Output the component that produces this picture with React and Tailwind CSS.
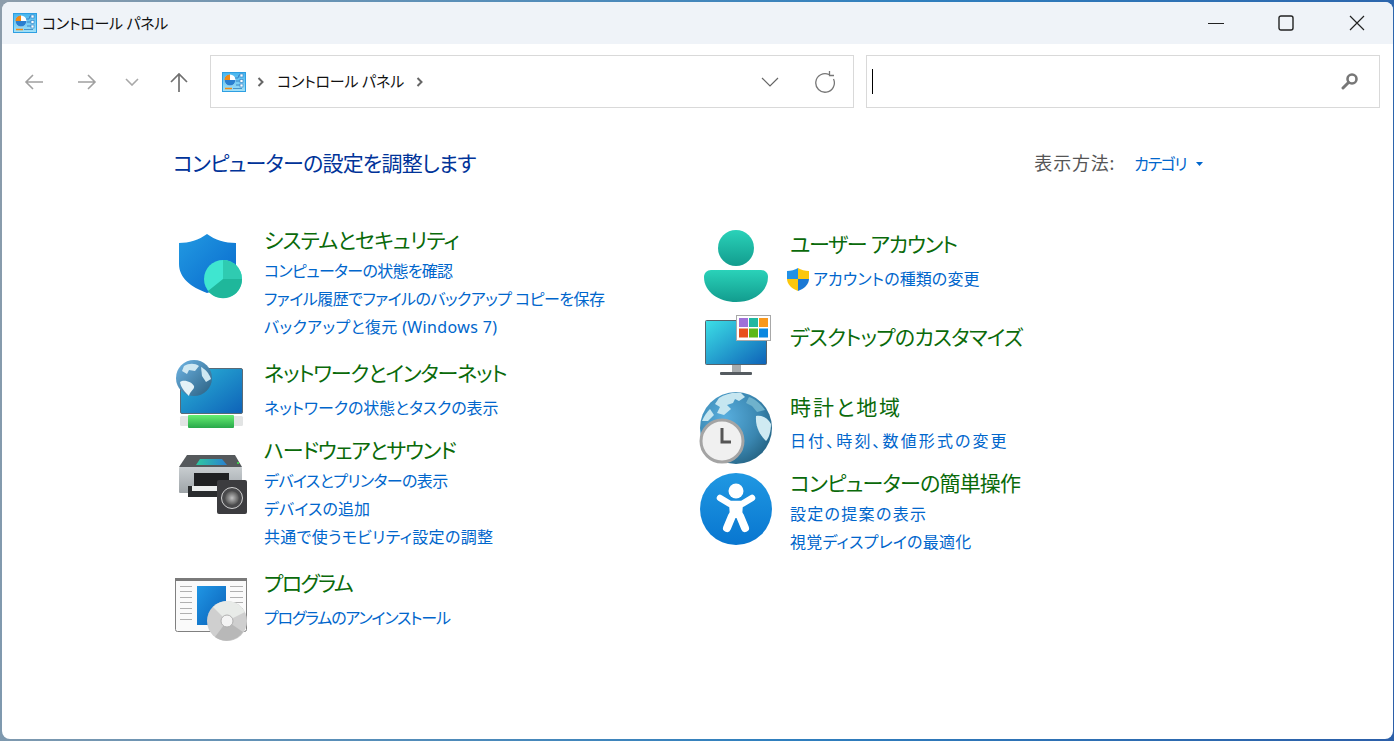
const LEFT = [
  { title: 'システムとセキュリティ', track: 'tracking-[-0.8px]', links: [['コンピューターの状態を確認', 'tracking-[-0.7px]'], ['ファイル履歴でファイルのバックアップ コピーを保存', 'tracking-[-0.55px]'], ['バックアップと復元 (Windows 7)', 'tracking-[0.36px]']], icon: ShieldIcon, h: 'h-[133px]', iconTop: 'mt-[4px]', linksTop: 'mt-[3px]' },
  { title: 'ネットワークとインターネット', track: 'tracking-[-1.15px]', links: [['ネットワークの状態とタスクの表示', 'tracking-[-0.12px]']], icon: NetworkIcon, h: 'h-[77px]', iconTop: '-mt-[1px]', linksTop: 'mt-[7px]' },
  { title: 'ハードウェアとサウンド', track: 'tracking-[-1.25px]', links: [['デバイスとプリンターの表示', 'tracking-[-0.6px]'], ['デバイスの追加', 'tracking-[0.1px]'], ['共通で使うモビリティ設定の調整', 'tracking-[0.33px]']], icon: PrinterIcon, h: 'h-[133px]', iconTop: 'mt-[9px]', linksTop: 'mt-[3px]' },
  { title: 'プログラム', track: 'tracking-[-1.6px]', links: [['プログラムのアンインストール', 'tracking-[-1.2px]']], icon: ProgramIcon, h: 'h-[77px]', iconTop: 'mt-[1px]', linksTop: 'mt-[7px]' },
]

const RIGHT = [
  { title: 'ユーザー アカウント', track: 'tracking-[-1.3px]', links: [['アカウントの種類の変更', 'tracking-[0.1px]']], icon: PersonIcon, h: 'h-[93px]', iconTop: 'mt-0', linksTop: 'mt-[7px]', uac: true },
  { title: 'デスクトップのカスタマイズ', track: 'tracking-[-0.75px]', links: [], icon: MonitorIcon, h: 'h-[70px]', iconTop: '-mt-[14px]', linksTop: 'mt-0' },
  { title: '時計と地域', track: 'tracking-[1.9px]', links: [['日付、時刻、数値形式の変更', 'tracking-[2.1px]']], icon: GlobeClockIcon, h: 'h-[76px]', iconTop: '-mt-[2px]', linksTop: 'mt-[6px]' },
  { title: 'コンピューターの簡単操作', track: 'tracking-[-0.8px]', links: [['設定の提案の表示', 'tracking-[1.3px]'], ['視覚ディスプレイの最適化', 'tracking-[0.2px]']], icon: EaseIcon, h: 'h-[90px]', iconTop: 'mt-[4px]', linksTop: 'mt-[3px]' },
]

function CpIcon({ id }) {
  return (
    <svg width="24" height="20" viewBox="0 0 24 20">
      <defs>
        <linearGradient id={id} x1="0" y1="0" x2="0" y2="1">
          <stop offset="0" stopColor="#45b4ee" />
          <stop offset="1" stopColor="#a5e2f8" />
        </linearGradient>
      </defs>
      <rect x="0.5" y="0.5" width="23" height="19" fill={`url(#${id})`} stroke="#2e9fe2" />
      <circle cx="8" cy="8" r="5.5" fill="#fff" />
      <path d="M8 8V2.5A5.5 5.5 0 0 0 2.5 8A5.5 5.5 0 0 0 13.5 8Z" fill="#2a7fd0" />
      <path d="M8 8V2.5A5.5 5.5 0 0 0 2.5 8Z" fill="#f28a12" />
      <path d="M13 6h3l1-3h1M14 9h4M14 13h4" stroke="#3a86c8" strokeWidth="1" fill="none" />
      <rect x="18" y="2" width="3" height="3" fill="#fff" stroke="#3a86c8" strokeWidth="0.7" />
      <rect x="18" y="7.5" width="3" height="3" fill="#fff" stroke="#3a86c8" strokeWidth="0.7" />
      <rect x="18" y="12" width="3" height="3" fill="#fff" stroke="#3a86c8" strokeWidth="0.7" />
      <path d="M3 16.5h7" stroke="#f28a12" strokeWidth="1.4" />
      <path d="M11 16.5h9" stroke="#4a94c8" strokeWidth="1" />
    </svg>
  )
}

function ShieldIcon() {
  return (
    <svg width="72" height="72" viewBox="0 0 72 72">
      <defs>
        <linearGradient id="sh" x1="0" y1="0" x2="1" y2="1">
          <stop offset="0" stopColor="#229ae2" />
          <stop offset="1" stopColor="#0868cc" />
        </linearGradient>
      </defs>
      <path d="M4 13C14 13 24 10 32 4C40 10 50 13 61 13V38C61 50 46 59 32 63C16 57 4 48 4 34Z" fill="url(#sh)" />
      <circle cx="48" cy="49" r="19" fill="#3fe6d0" />
      <path d="M48 49V30A19 19 0 0 1 67 49Z" fill="#2fcbb1" />
      <path d="M48 49H67A19 19 0 0 1 33 61Z" fill="#1fb79b" />
    </svg>
  )
}

function NetworkIcon() {
  return (
    <svg width="72" height="72" viewBox="0 0 72 72">
      <defs>
        <linearGradient id="ns" x1="0" y1="0" x2="1" y2="1">
          <stop offset="0" stopColor="#2cb6d8" />
          <stop offset="1" stopColor="#0e62b8" />
        </linearGradient>
        <linearGradient id="ng" x1="0" y1="0" x2="1" y2="1">
          <stop offset="0" stopColor="#6fb6e6" />
          <stop offset="1" stopColor="#2a5f80" />
        </linearGradient>
        <linearGradient id="nb" x1="0" y1="0" x2="0" y2="1">
          <stop offset="0" stopColor="#66ee72" />
          <stop offset="1" stopColor="#28a84a" />
        </linearGradient>
      </defs>
      <rect x="5.5" y="10.5" width="62" height="45" rx="1.5" fill="url(#ns)" stroke="#5a6a76" />
      <rect x="5" y="58" width="63" height="10" rx="1.5" fill="#e2e4e4" />
      <rect x="13" y="57" width="46" height="13" rx="1" fill="url(#nb)" />
      <circle cx="19" cy="20" r="18" fill="url(#ng)" />
      <path d="M9 8C14 5 20 5 24 8L20 13L14 12L12 16L7 13Z" fill="#cfe8f2" />
      <path d="M5 24C9 21 17 24 19 28C20 31 15 33 14 38C10 34 6 30 5 24Z" fill="#e4f2f7" />
      <path d="M26 9C30 11 34 15 36 21L31 24L27 18Z" fill="#cfe8f2" />
    </svg>
  )
}

function PrinterIcon() {
  return (
    <svg width="72" height="72" viewBox="0 0 72 72">
      <defs>
        <linearGradient id="pb" x1="0" y1="0" x2="0" y2="1">
          <stop offset="0" stopColor="#c8cdd0" />
          <stop offset="1" stopColor="#9ea4a8" />
        </linearGradient>
        <linearGradient id="pc" x1="0" y1="0" x2="1" y2="0">
          <stop offset="0" stopColor="#2fc8a0" />
          <stop offset="1" stopColor="#2a80d0" />
        </linearGradient>
        <radialGradient id="pz">
          <stop offset="0" stopColor="#c0c0c0" />
          <stop offset="1" stopColor="#555" />
        </radialGradient>
      </defs>
      <path d="M4 22L12 10H60L67 22Z" fill="#55595c" />
      <path d="M21 20L25 14H47L52 20Z" fill="url(#pc)" />
      <rect x="62" y="17" width="2" height="2" fill="#3ec84a" />
      <rect x="4" y="22" width="63" height="26" rx="1" fill="url(#pb)" />
      <rect x="19" y="28" width="35" height="15" fill="#1f2022" />
      <rect x="13" y="41" width="35" height="11" fill="#2a2c2e" />
      <rect x="17" y="41" width="32" height="5" fill="#eceeee" />
      <rect x="42" y="35" width="30" height="34" rx="2" fill="#3c3c3f" />
      <circle cx="57" cy="53" r="10.5" fill="#4a4a4c" stroke="#d0d0d0" strokeWidth="1" />
      <circle cx="57" cy="53" r="7" fill="url(#pz)" />
    </svg>
  )
}

function ProgramIcon() {
  return (
    <svg width="72" height="72" viewBox="0 0 72 72">
      <defs>
        <linearGradient id="pr" x1="0" y1="0" x2="1" y2="1">
          <stop offset="0" stopColor="#2096e4" />
          <stop offset="1" stopColor="#0a60b8" />
        </linearGradient>
      </defs>
      <rect x="0.5" y="8.5" width="71" height="53" rx="2" fill="#fafafa" stroke="#808080" />
      <rect x="0" y="8" width="72" height="3" fill="#7a7a7a" />
      <path d="M5 16.5h12M5 21.5h12M5 27.5h12M5 32.5h12M5 38.5h12M5 43.5h12M5 49.5h12M55 16.5h13M55 21.5h13M55 27.5h13M55 32.5h13M55 38.5h13" stroke="#b0b0b0" strokeWidth="1" />
      <rect x="22" y="16" width="29" height="39" fill="url(#pr)" />
      <circle cx="52" cy="51" r="20" fill="#cfcfcf" />
      <path d="M52 51L38 37A20 20 0 0 1 70 42Z" fill="#e8ebe8" />
      <path d="M52 51L68 62A20 20 0 0 1 40 67Z" fill="#b8b8b8" />
      <circle cx="52" cy="51" r="6" fill="#f4f4f4" stroke="#b0b0b0" />
    </svg>
  )
}

function PersonIcon() {
  return (
    <svg width="72" height="72" viewBox="0 0 72 72">
      <defs>
        <linearGradient id="pe" x1="0" y1="0" x2="0" y2="1">
          <stop offset="0" stopColor="#2ad2b9" />
          <stop offset="1" stopColor="#129c8e" />
        </linearGradient>
      </defs>
      <circle cx="37" cy="18" r="18" fill="url(#pe)" />
      <path d="M12 40H62C66 40 69 43 69 47C69 62 54 72 37 72C20 72 5 62 5 47C5 43 8 40 12 40Z" fill="url(#pe)" />
    </svg>
  )
}

function MonitorIcon() {
  return (
    <svg width="73" height="72" viewBox="0 0 73 72">
      <defs>
        <linearGradient id="mo" x1="0" y1="0" x2="1" y2="1">
          <stop offset="0" stopColor="#3cdfe6" />
          <stop offset="1" stopColor="#0e62b8" />
        </linearGradient>
      </defs>
      <rect x="33" y="55" width="9" height="8" fill="#a8acae" />
      <rect x="21" y="63" width="32" height="3" rx="1" fill="#555b60" />
      <rect x="6.5" y="11.5" width="61" height="44" rx="1" fill="url(#mo)" stroke="#56636c" />
      <rect x="37.5" y="6.5" width="34" height="25" fill="#fff" stroke="#a8a8a8" />
      <rect x="40" y="9" width="9" height="9" fill="#a070d8" />
      <rect x="50" y="9" width="9" height="9" fill="#20b8a0" />
      <rect x="60" y="9" width="9" height="9" fill="#f8981d" />
      <rect x="40" y="19.5" width="9" height="9" fill="#e8501c" />
      <rect x="50" y="19.5" width="9" height="9" fill="#5cb818" />
      <rect x="60" y="19.5" width="9" height="9" fill="#0a88e0" />
    </svg>
  )
}

function GlobeClockIcon() {
  return (
    <svg width="73" height="74" viewBox="0 0 73 74">
      <defs>
        <radialGradient id="gl" cx="0.35" cy="0.35" r="0.8">
          <stop offset="0" stopColor="#58aede" />
          <stop offset="0.6" stopColor="#3a86b0" />
          <stop offset="1" stopColor="#1f5a78" />
        </radialGradient>
      </defs>
      <circle cx="37" cy="37" r="36" fill="url(#gl)" />
      <path d="M20 7C26 3 34 1 42 2L46 6L40 10L36 8L34 12L28 14L32 18L25 24L18 22L21 16L16 13Z" fill="#c6e6f0" />
      <path d="M3 30C5 25 8 21 11 18L15 24L9 30Z" fill="#c6e6f0" />
      <path d="M57 25C62 24 68 26 72 33C72 40 70 47 67 50C63 46 56 38 57 25Z" fill="#cfeaf2" />
      <path d="M50 6C56 8 62 13 66 19L58 21L53 15L47 12Z" fill="#6fb2cc" />
      <circle cx="23" cy="50" r="21" fill="#f0f0f0" stroke="#a4a4a4" strokeWidth="3" />
      <path d="M23 37V51H32" fill="none" stroke="#555" strokeWidth="3" />
    </svg>
  )
}

function EaseIcon() {
  return (
    <svg width="73" height="72" viewBox="0 0 73 72">
      <defs>
        <linearGradient id="ea" x1="0" y1="0" x2="0" y2="1">
          <stop offset="0" stopColor="#2098e2" />
          <stop offset="1" stopColor="#0876d0" />
        </linearGradient>
      </defs>
      <circle cx="37" cy="36" r="36" fill="url(#ea)" />
      <circle cx="37" cy="18" r="7.5" fill="#fff" />
      <path d="M21 25L31 31H43L53 25" fill="none" stroke="#fff" strokeWidth="6.5" strokeLinecap="round" strokeLinejoin="round" />
      <path d="M31 31H43L42 44H32Z" fill="#fff" stroke="#fff" strokeWidth="2" />
      <path d="M33 43L28 55M41 43L46 55" fill="none" stroke="#fff" strokeWidth="8" strokeLinecap="round" />
    </svg>
  )
}

function UacShield() {
  return (
    <svg width="22" height="23" viewBox="0 0 22 23" className="shrink-0">
      <path d="M11 0C8 2 4 3 0 3V11H11Z" fill="#2291e6" />
      <path d="M11 0C14 2 18 3 22 3V11H11Z" fill="#fcc70c" />
      <path d="M0 11C0 16 5 21 11 23V11Z" fill="#fcc70c" />
      <path d="M22 11C22 16 17 21 11 23V11Z" fill="#1a78d4" />
    </svg>
  )
}

function Crumb({ className }) {
  return (
    <svg width="7" height="10" viewBox="0 0 7 10" className={className}>
      <path d="M1.5 1L5.5 5L1.5 9" fill="none" stroke="#666" strokeWidth="2" />
    </svg>
  )
}

function Category({ item, iconW }) {
  const Icon = item.icon
  return (
    <div className={`flex ${item.h}`}>
      <div className={`shrink-0 h-[72px] ${iconW} ${item.iconTop}`}>
        <Icon />
      </div>
      <div>
        <div className={`h-[28px] text-[21px] leading-[28px] text-[#0a6a0a] whitespace-nowrap ${item.track}`}>{item.title}</div>
        <div className={item.linksTop}>
          {item.links.map(([text, track]) => (
            <div key={text} className={`h-[28px] flex items-center whitespace-nowrap text-[16px] text-[#0066cc] ${item.uac ? '-ml-[3px] gap-[4px]' : ''} ${track}`}>
              {item.uac && <UacShield />}
              {text}
            </div>
          ))}
        </div>
      </div>
    </div>
  )
}

export default function App() {
  return (
    <div className="w-[1394px] h-[741px] overflow-hidden p-[2px] pr-[1px] bg-[linear-gradient(100deg,#8d9dab_0%,#5a8fb8_30%,#2f7fbe_60%,#2c5fa8_100%)] font-['Noto_Sans','Noto_Sans_CJK_JP',sans-serif] [font-feature-settings:'palt']">
      <div className="h-full w-full rounded-[8px] bg-white overflow-hidden flex flex-col">
        <div className="h-[42px] shrink-0 bg-[#eff3f8] flex items-center pl-[11px] text-[#111]">
          <CpIcon id="cp1" />
          <span className="ml-[5px] text-[15px] tracking-[-0.3px] whitespace-nowrap">コントロール パネル</span>
          <div className="ml-auto flex items-center h-full">
            <svg width="16" height="16" viewBox="0 0 16 16" className="mr-[54px]"><path d="M0 8.5h16" stroke="#222" strokeWidth="1" /></svg>
            <svg width="16" height="16" viewBox="0 0 16 16" className="mr-[55px]"><rect x="1" y="1" width="14" height="14" rx="2" fill="none" stroke="#222" strokeWidth="1.4" /></svg>
            <svg width="16" height="16" viewBox="0 0 16 16" className="mr-[28px]"><path d="M1 1L15 15M15 1L1 15" stroke="#222" strokeWidth="1.2" /></svg>
          </div>
        </div>

        <div className="flex items-center h-[52px] mt-[11px] shrink-0">
          <svg width="20" height="18" viewBox="0 0 20 18" className="ml-[22px] mt-[2px] text-[#a0a0a0]"><path d="M19 9H2M9 2L2 9L9 16" fill="none" stroke="currentColor" strokeWidth="1.6" /></svg>
          <svg width="20" height="18" viewBox="0 0 20 18" className="ml-[33px] mt-[2px] text-[#a0a0a0]"><path d="M1 9H18M11 2L18 9L11 16" fill="none" stroke="currentColor" strokeWidth="1.6" /></svg>
          <svg width="14" height="8" viewBox="0 0 14 8" className="ml-[28px] mt-[2px] text-[#a8a8a8]"><path d="M1 1L7 7L13 1" fill="none" stroke="currentColor" strokeWidth="1.6" /></svg>
          <svg width="20" height="20" viewBox="0 0 20 20" className="ml-[30px] mt-[2px] text-[#707070]"><path d="M10 20V2M2 10L10 2L18 10" fill="none" stroke="currentColor" strokeWidth="1.7" /></svg>
          <div className="ml-[21px] w-[644px] h-[53px] border border-[#d9d9d9] flex items-center pt-[1px] pl-[11px] pr-[17px]">
            <CpIcon id="cp2" />
            <Crumb className="ml-[11px]" />
            <span className="ml-[13px] text-[15px] tracking-[-0.2px] text-[#111] whitespace-nowrap">コントロール パネル</span>
            <Crumb className="ml-[12px]" />
            <svg width="18" height="10" viewBox="0 0 18 10" className="ml-auto mr-[35px] text-[#666]"><path d="M1 1L9 9L17 1" fill="none" stroke="currentColor" strokeWidth="1.2" /></svg>
            <svg width="22" height="24" viewBox="0 0 22 24" className="text-[#777]"><path d="M15 4.5A9.3 9.3 0 1 0 19.5 9M15.5 1V5.5H20" fill="none" stroke="currentColor" strokeWidth="1.3" /></svg>
          </div>
          <div className="ml-[12px] w-[514px] h-[53px] border border-[#d9d9d9] flex items-center pl-[5px] pr-[20px]">
            <div className="w-px h-[25px] bg-black" />
            <svg width="18" height="18" viewBox="0 0 18 18" className="ml-auto text-[#777]"><circle cx="11" cy="7" r="4.5" fill="none" stroke="currentColor" strokeWidth="2.6" /><path d="M7.5 10.5L2 16" stroke="currentColor" strokeWidth="3" strokeLinecap="round" /></svg>
          </div>
        </div>

        <div className="w-[1030px] ml-[171px] mt-[40px] flex items-center justify-between h-[32px] shrink-0">
          <div className="pt-[2px] text-[21px] tracking-[-0.8px] text-[#003399] whitespace-nowrap">コンピューターの設定を調整します</div>
          <div className="flex items-center whitespace-nowrap pt-[1px]">
            <span className="-ml-px text-[18px] tracking-[0.8px] text-[#555]">表示方法:</span>
            <span className="ml-[19px] text-[16px] tracking-[-1.4px] text-[#0066cc]">カテゴリ</span>
            <svg width="7" height="4" viewBox="0 0 7 4" className="ml-[10px]"><path d="M0 0H7L3.5 4Z" fill="#0066cc" /></svg>
          </div>
        </div>

        <div className="flex ml-[173px] mt-[47px]">
          <div className="w-[524px]">
            {LEFT.map((c) => <Category key={c.title} item={c} iconW="w-[89px]" />)}
          </div>
          <div className="mt-[4px]">
            {RIGHT.map((c) => <Category key={c.title} item={c} iconW="w-[91px]" />)}
          </div>
        </div>
      </div>
    </div>
  )
}
